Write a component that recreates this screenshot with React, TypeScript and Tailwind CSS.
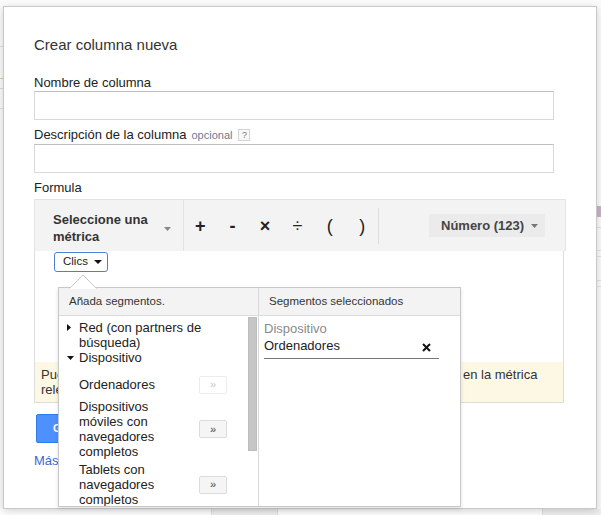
import React from 'react';

const ArrowBtn: React.FC<{ disabled?: boolean }> = ({ disabled }) => (
  <button
    className={
      disabled
        ? 'w-[28px] h-[18px] shrink-0 rounded-[2px] border border-[#ececec] bg-white text-[11px] leading-none text-[#c8c8c8]'
        : 'w-[28px] h-[18px] shrink-0 rounded-[2px] border border-[#dcdcdc] bg-[#f5f5f5] text-[11px] leading-none text-[#444]'
    }
  >
    »
  </button>
);

const Caret: React.FC<{ open?: boolean }> = ({ open }) => (
  <span className="w-[12px] h-[15px] shrink-0 flex items-center">
    {open ? (
      <svg width="7" height="4" viewBox="0 0 7 4">
        <path d="M0 0h7L3.5 4z" fill="#111" />
      </svg>
    ) : (
      <svg width="4" height="7" viewBox="0 0 4 7">
        <path d="M0 0l4 3.5L0 7z" fill="#111" />
      </svg>
    )}
  </span>
);

export default function App() {
  return (
    <div className="relative w-[601px] h-[515px] overflow-hidden bg-[#fbfbfb] font-['Liberation_Sans',Arial,sans-serif] text-[#222]">
      {/* page behind the dialog */}
      <div className="flex h-full flex-col">
        <div className="flex flex-1 justify-between">
          <div className="w-[3px] flex flex-col pt-[46px]">
            <div className="h-[32px] border-t border-[#dedede]" />
            <div className="h-[10px] border-t border-[#e8c9a0]" />
            <div className="h-[20px] border-t border-[#d5dde8]" />
            <div className="border-t border-[#e2e2e2]" />
          </div>
          <div className="w-[4px] flex flex-col pt-[206px]">
            <div className="h-[11px] bg-[#cdb3c3]" />
            <div className="h-[10px]" />
            <div className="h-[23px] border-t border-[#e3e3e3]" />
            <div className="h-[6px] border-t border-[#e3e3e3]" />
            <div className="h-[24px] border-t border-[#e3e3e3]" />
            <div className="h-[6px] border-t border-[#e3e3e3]" />
            <div className="border-t border-[#e3e3e3]" />
          </div>
        </div>
        <div className="flex h-[6px]">
          <div className="w-[211px] bg-white" />
          <div className="w-[67px] bg-[#efefef] border-x border-[#e0e0e0]" />
          <div className="w-[264px] bg-white" />
          <div className="flex-1 bg-[#efefef] border-l border-[#e0e0e0]" />
        </div>
      </div>

      {/* dialog */}
      <div className="absolute left-[3px] top-[6px] w-[594px] h-[503px] border border-[#c9c9c9] bg-white shadow-[0_2px_8px_rgba(0,0,0,0.18)] pl-[30px] pt-[28px]">
        <h2 className="text-[15px] leading-[20px] text-[#333]">Crear columna nueva</h2>

        <label className="block mt-[20px] text-[13px] leading-[16px]">Nombre de columna</label>
        <div className="w-[520px] h-[29px] border border-[#d9d9d9] border-t-[#c0c0c0] bg-white" />

        <div className="mt-[7px] flex items-center text-[13px] leading-[16px]">
          <span>Descripción de la columna</span>
          <span className="ml-[5px] text-[11px] text-[#6b7c93]">opcional</span>
          <span className="ml-[6px] w-[12px] h-[12px] border border-[#d4d4d4] bg-[#f7f7f7] flex items-center justify-center text-[9px] leading-none text-[#777]">?</span>
        </div>
        <div className="mt-[1px] w-[520px] h-[29px] border border-[#d9d9d9] border-t-[#c0c0c0] bg-white" />

        <label className="block mt-[7px] text-[13px] leading-[16px]">Formula</label>

        {/* toolbar */}
        <div className="mt-[3px] w-[532px] h-[52px] flex items-center border-x border-t border-[#e3e3e3] bg-[#f3f3f3]">
          <div className="w-[149px] h-full flex items-center border-r border-[#e2e2e2] pl-[18px] pr-[12px] pt-[4px]">
            <span className="w-[100px] text-[13px] leading-[17px] font-bold text-[#333]">Seleccione una métrica</span>
            <svg className="ml-auto mt-[2px]" width="7" height="4" viewBox="0 0 7 4">
              <path d="M0 0h7L3.5 4z" fill="#888" />
            </svg>
          </div>
          <div className="flex text-[18px] leading-[20px] text-[#222]">
            <span className="w-[32.4px] text-center font-bold">+</span>
            <span className="w-[32.4px] text-center font-bold">-</span>
            <span className="w-[32.4px] text-center font-bold">×</span>
            <span className="w-[32.4px] text-center">÷</span>
            <span className="w-[32.4px] text-center">(</span>
            <span className="w-[32.4px] text-center">)</span>
          </div>
          <div className="w-px h-[36px] bg-[#dedede]" />
          <button className="ml-auto mr-[20px] w-[116px] h-[23px] flex items-center pl-[12px] bg-[#ebebeb] text-[13px] font-bold text-[#444]">
            Número (123)
            <svg className="ml-[7px]" width="7" height="4" viewBox="0 0 7 4">
              <path d="M0 0h7L3.5 4z" fill="#777" />
            </svg>
          </button>
        </div>

        {/* formula body */}
        <div className="w-[530px] h-[152px] flex flex-col border-x border-b border-[#dddddd] bg-white">
          <button className="ml-[19px] mt-[1px] w-[54px] h-[20px] flex items-center pl-[8px] rounded-[3px] border border-[#4d7fd1] bg-white text-[11.5px] text-[#222]">
            Clics
            <svg className="ml-[6px]" width="8" height="4" viewBox="0 0 8 4">
              <path d="M0 0h8L4 4z" fill="#111" />
            </svg>
          </button>
          <div className="mt-auto h-[40px] bg-[#fdf8e3] pl-[6px] pt-[5px] text-[13px] leading-[15px] text-[#333]">
            <p className="whitespace-nowrap">Puede segmentar las métricas para crear columnas concretas. Haga clic en la métrica</p>
            <p className="whitespace-nowrap">relevante para añadir segmentos.</p>
          </div>
        </div>

        <button className="mt-[11px] ml-[2px] h-[29px] px-[16px] rounded-[2px] border border-[#3079ed] bg-[#4d90fe] text-[11px] font-bold text-white">
          Guardar
        </button>
        <a className="block mt-[10px] text-[13px] leading-[16px] text-[#3a68d6]">Más información</a>

        {/* segment picker popup */}
        <div className="absolute left-[54px] top-[280px] w-[403px] h-[220px] border border-[#c8c8c8] bg-white shadow-[0_2px_4px_rgba(0,0,0,0.12)]">
          <svg className="absolute left-[10px] top-[-14px]" width="28" height="15" viewBox="0 0 28 15">
            <path d="M0 15L14 1L28 15z" fill="#fff" />
            <path d="M0.5 14.5L14 1L27.5 14.5" fill="none" stroke="#c8c8c8" />
          </svg>
          <div className="flex h-full">
            <div className="w-[200px] flex flex-col border-r border-[#d9d9d9]">
              <div className="h-[28px] shrink-0 flex items-center pl-[10px] border-b border-[#dcdcdc] bg-[#f3f3f3] text-[11.5px] text-[#333]">
                Añada segmentos.
              </div>
              <div className="flex flex-1 overflow-hidden">
                <div className="flex-1 pt-[4px] text-[13px] leading-[15px] text-[#222]">
                  <div className="flex pl-[8px]">
                    <Caret />
                    <span className="w-[160px]">Red (con partners de búsqueda)</span>
                  </div>
                  <div className="flex pl-[8px]">
                    <Caret open />
                    <span>Dispositivo</span>
                  </div>
                  <div className="mt-[10px] h-[19px] flex items-center pl-[20px]">
                    <span className="w-[104px]">Ordenadores</span>
                    <span className="ml-[16px]"><ArrowBtn disabled /></span>
                  </div>
                  <div className="mt-[5px] flex items-center pl-[20px]">
                    <span className="w-[104px]">Dispositivos móviles con navegadores completos</span>
                    <span className="ml-[16px]"><ArrowBtn /></span>
                  </div>
                  <div className="mt-[3px] flex items-center pl-[20px]">
                    <span className="w-[104px]">Tablets con navegadores completos</span>
                    <span className="ml-[16px]"><ArrowBtn /></span>
                  </div>
                </div>
                <div className="w-[9px] mr-[1px] mt-[1px] h-[134px] bg-[#c6c6c6] border border-[#bdbdbd]" />
              </div>
            </div>
            <div className="flex-1 flex flex-col">
              <div className="h-[28px] shrink-0 flex items-center pl-[10px] border-b border-[#dcdcdc] bg-[#f3f3f3] text-[11.5px] text-[#333]">
                Segmentos seleccionados
              </div>
              <div className="pl-[5px] pt-[4px] text-[13px] leading-[17px]">
                <div className="text-[#8a8a8a]">Dispositivo</div>
                <div className="w-[175px] flex items-center justify-between pb-[4px] pr-[8px] border-b border-[#777]">
                  <span className="text-[#222]">Ordenadores</span>
                  <svg className="mt-[4px]" width="9" height="9" viewBox="0 0 9 9">
                    <path d="M1 1l7 7M8 1L1 8" stroke="#111" strokeWidth="2" />
                  </svg>
                </div>
              </div>
            </div>
          </div>
        </div>
      </div>
    </div>
  );
}
